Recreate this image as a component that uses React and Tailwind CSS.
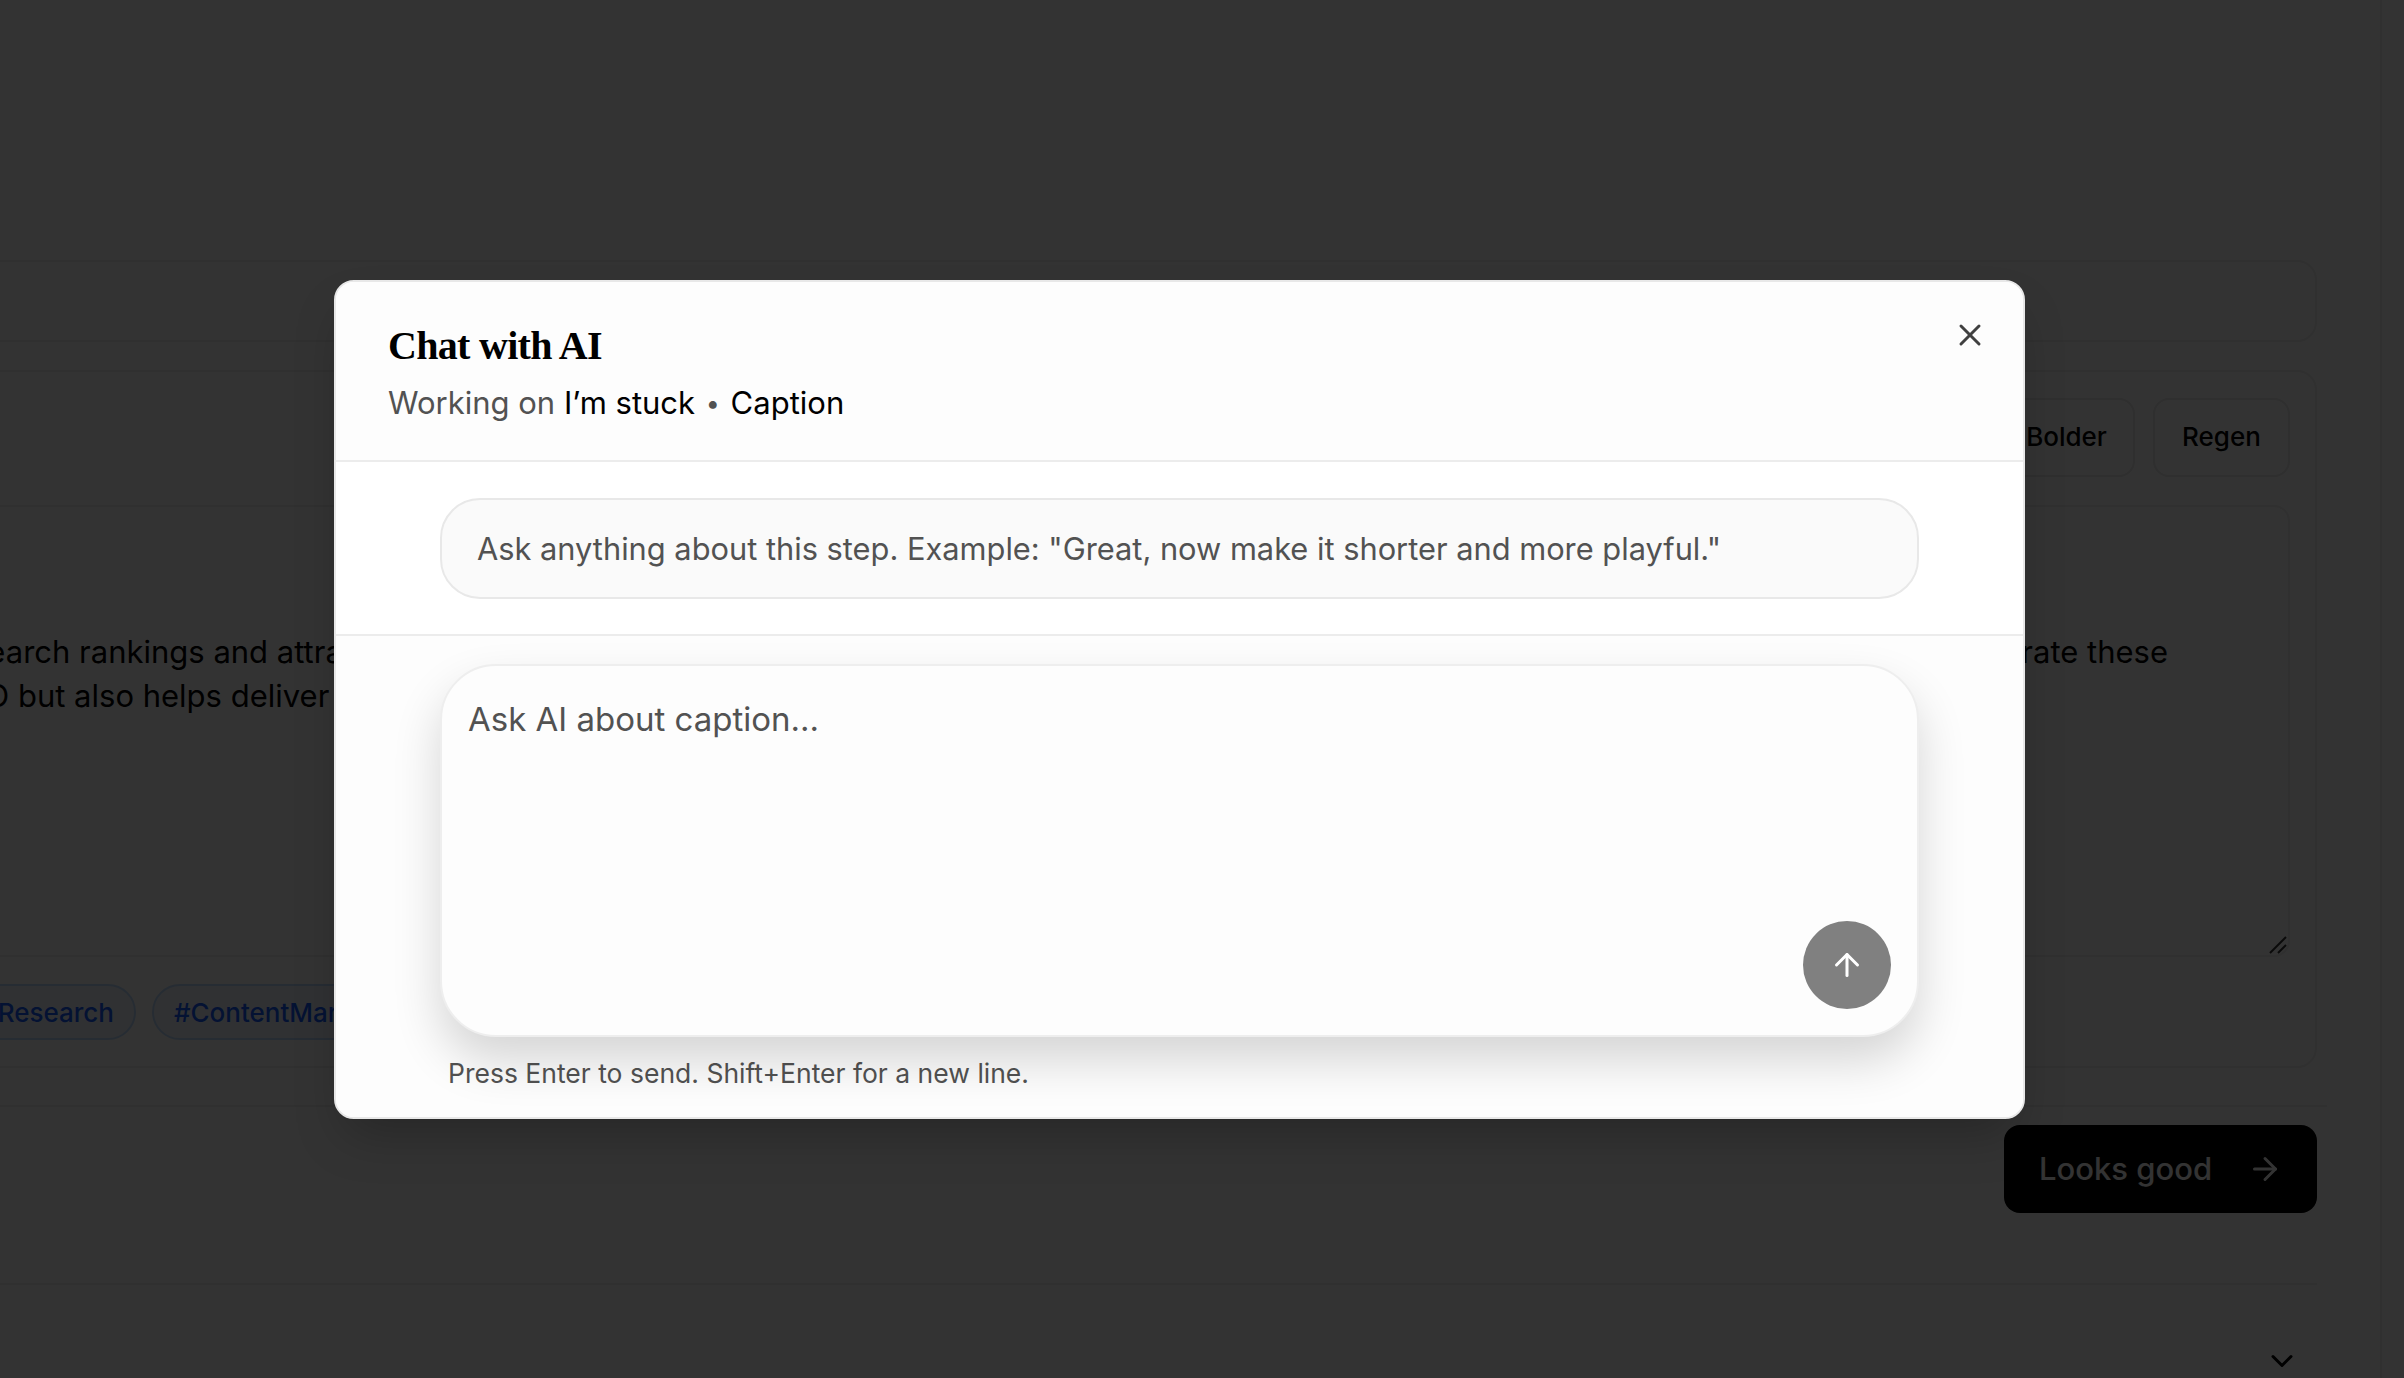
import { ArrowRight, ArrowUp, ChevronDown, X } from "lucide-react";

const chips = ["#KeywordResearch", "#ContentMarketing", "#SEOTips"];

function PageBehind() {
  return (
    <div className="flex h-full justify-end overflow-hidden bg-white text-black">
      <div className="w-[2480px] shrink-0 pl-[2px] pr-[63px] pt-[260px]">
        <div className="h-[82px] rounded-[20px] border-2 border-[#eeeeee]" />

        {/* Caption card */}
        <div className="mt-[28px] flex h-[698px] flex-col rounded-[20px] border-2 border-[#eeeeee] pl-[26px] pr-[25px] pt-[26px]">
          <div className="flex justify-end gap-[18px]">
            <button className="h-[79px] w-[137px] rounded-[16px] border-2 border-[#e8e8e8] pb-[2px] text-[26px] font-medium">Bolder</button>
            <button className="h-[79px] w-[137px] rounded-[16px] border-2 border-[#e8e8e8] pb-[2px] text-[26px] font-medium">Regen</button>
          </div>
          <div className="relative mt-[28px] h-[452px] rounded-[16px] border-2 border-[#eeeeee] pt-[123px] text-[31px] leading-[44px]">
            <div className="flex justify-between pl-[39px] pr-[120px] whitespace-nowrap">
              <span>search rankings and attract</span>
              <span>integrate these</span>
            </div>
            <div className="pl-[15px] whitespace-nowrap">SEO but also helps deliver</div>
            <svg width="20" height="20" viewBox="0 0 20 20" className="absolute bottom-0 right-0 text-[#333333]">
              <path d="M2 18 L18 2 M10 18 L18 10" stroke="currentColor" strokeWidth="2" fill="none" />
            </svg>
          </div>
          <div className="mt-[27px] -ml-[80px] flex gap-[16px]">
            {chips.map((chip) => (
              <span key={chip} className="flex h-[56px] items-center rounded-full border-2 border-blue-200 bg-blue-50 px-[20px] text-[26px] font-medium whitespace-nowrap text-blue-600">
                {chip}
              </span>
            ))}
          </div>
        </div>

        {/* Footer action */}
        <div className="mt-[37px] -mr-[10px] border-t-2 border-[#eeeeee] pr-[10px] pt-[18px]">
          <div className="flex justify-end">
            <button className="flex h-[88px] w-[313px] items-center justify-between rounded-[16px] bg-black pl-[35px] pr-[34px] text-[31px] font-medium text-white">
              Looks good
              <ArrowRight size={36} />
            </button>
          </div>
        </div>

        <div className="mt-[70px] flex justify-end border-t-2 border-[#eeeeee] pr-[17px] pt-[58px]">
          <ChevronDown size={36} />
        </div>
      </div>
      <div className="w-[24px] shrink-0 border-l-2 border-[#f0f0f0] bg-[#fefefe]" />
    </div>
  );
}

function ChatModal() {
  return (
    <div className="relative flex h-[839px] w-[1691px] flex-col overflow-hidden rounded-[20px] border-2 border-[#e8e8e8] bg-white shadow-2xl">
      <button className="absolute right-[35px] top-[35px] text-[#404040]">
        <X size={36} />
      </button>

      <div className="h-[180px] shrink-0 border-b-2 border-[#ececec] bg-[#fdfdfd] px-[52px] pt-[41px]">
        <h2 className="font-['Liberation_Serif',serif] text-[40px] leading-[46px] font-bold tracking-[-0.7px] text-black">Chat with AI</h2>
        <p className="mt-[12px] text-[31px] leading-[44px] text-[#525252]">
          Working on <span className="text-black">I’m stuck</span> <span className="mx-[2px] align-[2px] text-[25px]">•</span> <span className="text-black">Caption</span>
        </p>
      </div>

      <div className="h-[174px] shrink-0 border-b-2 border-[#ececec] px-[104px] pt-[36px]">
        <div className="flex h-[101px] items-center rounded-[40px] border-2 border-[#e8e8e8] bg-[#fafafa] px-[35px] pt-[2px] text-[30.8px] text-[#525252]">
          Ask anything about this step. Example: "Great, now make it shorter and more playful."
        </div>
      </div>

      <div className="flex-1 bg-[#fdfdfd] px-[104px] pt-[28px]">
        <div className="relative h-[373px] rounded-[56px] border-2 border-[#eeeeee] bg-[#fdfdfd] px-[26px] pt-[30px] text-[33px] leading-[46px] text-[#525252] shadow-[0_24px_48px_rgba(0,0,0,0.16)]">
          Ask AI about caption...
          <button className="absolute bottom-[26px] right-[26px] flex h-[88px] w-[88px] items-center justify-center rounded-full bg-[#808080] text-white">
            <ArrowUp size={36} />
          </button>
        </div>
        <p className="mt-[16px] pl-[8px] text-[26.5px] leading-[40px] text-[#525252]">Press Enter to send. Shift+Enter for a new line.</p>
      </div>
    </div>
  );
}

export default function App() {
  return (
    <div className="relative h-[1378px] overflow-hidden font-['Inter',sans-serif]">
      <PageBehind />
      <div className="absolute inset-0 bg-black/80 pl-[334px] pt-[280px]">
        <ChatModal />
      </div>
    </div>
  );
}
